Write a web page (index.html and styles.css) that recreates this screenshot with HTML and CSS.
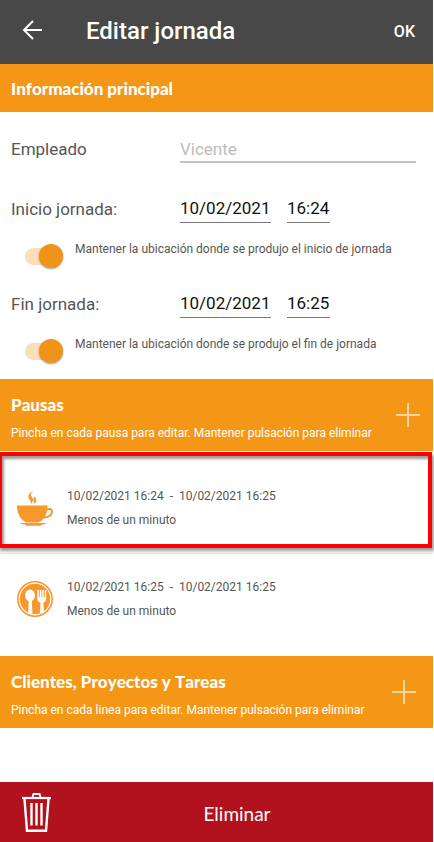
FILE: index.html
```html
<!DOCTYPE html>
<html lang="es">
<head>
<meta charset="utf-8">
<meta name="viewport" content="width=device-width, initial-scale=1">
<title>Editar jornada</title>
<link rel="stylesheet" href="styles.css">
</head>
<body>
<header class="topbar">
  <button class="back" type="button" aria-label="Volver">
    <svg width="20" height="20" viewBox="0 0 20 20" fill="none" stroke="#fff" stroke-width="2"><path d="M20 10H2M11 1L2 10l9 9"/></svg>
  </button>
  <h1 class="title">Editar jornada</h1>
  <button class="ok" type="submit" form="jornada">OK</button>
</header>
<main class="content">
  <div class="section-bar section-short"><h2 class="section-title">Información principal</h2></div>
  <form class="form" id="jornada">
    <div class="field">
      <label class="label" for="empleado">Empleado</label>
      <input class="value employee" id="empleado" type="text" placeholder="Vicente">
    </div>
    <div class="field">
      <label class="label" for="inicio-fecha">Inicio jornada:</label>
      <input class="value date" id="inicio-fecha" type="text" value="10/02/2021">
      <input class="value time" type="text" value="16:24" aria-label="Hora de inicio">
    </div>
    <div class="keep">
      <input class="switch" id="ubi-inicio" type="checkbox" role="switch" checked>
      <label class="keep-text" for="ubi-inicio">Mantener la ubicación donde se produjo el inicio de jornada</label>
    </div>
    <div class="field">
      <label class="label" for="fin-fecha">Fin jornada:</label>
      <input class="value date" id="fin-fecha" type="text" value="10/02/2021">
      <input class="value time" type="text" value="16:25" aria-label="Hora de fin">
    </div>
    <div class="keep">
      <input class="switch" id="ubi-fin" type="checkbox" role="switch" checked>
      <label class="keep-text" for="ubi-fin">Mantener la ubicación donde se produjo el fin de jornada</label>
    </div>
  </form>
  <section>
    <div class="section-bar section-pauses">
      <div class="section-text">
        <h2 class="section-title">Pausas</h2>
        <p class="hint">Pincha en cada pausa para editar. Mantener pulsación para eliminar</p>
      </div>
      <button class="add" type="button" aria-label="Añadir pausa">
        <svg width="24" height="24" viewBox="0 0 24 24" stroke="#fff" stroke-opacity=".6" stroke-width="2"><path d="M12 0v24M0 12h24"/></svg>
      </button>
    </div>
    <ul class="pauses">
      <li class="pause selected">
        <svg class="pause-icon" width="36" height="36" viewBox="0 -1 36 36" fill="#f7982d">
          <path d="M16 0C11.200 2.500 10.300 5.300 12.300 8.200c1.200 1.600 2 2.900 1.700 4.800 2.600-2.600 2.500-4.400.8-6.900C13.400 4 13.800 2.300 16 0zM18.500 5c-2.300 1.800-2.800 3.200-1.700 5 .6 1 .5 1.900-.3 3.100 2.500-1.200 3.400-2.600 2.600-4.400-.6-1.400-1.100-2.300-.6-3.700z"/>
          <path d="M0 14.500h30.500c-.1 7.500-2.500 13.500-8 16.500H8.500C2.500 28 .1 22 0 14.500z"/>
          <path d="M29.500 18.700c3-1.600 5.500-.8 5.500 2.100 0 3.300-3.200 5.300-8 5.600" fill="none" stroke="#f7982d" stroke-width="2"/>
          <path d="M8 31h14v1.500H8z" fill="#fbd0a0"/>
          <path d="M3.500 32h25.500c0 1.200-3 1.500-5 1.800v1H9v-1C7 33.500 3.500 33.200 3.500 32z"/>
        </svg>
        <div class="pause-text"><p>10/02/2021 16:24 &nbsp;-&nbsp; 10/02/2021 16:25</p><p>Menos de un minuto</p></div>
      </li>
      <li class="pause">
        <svg class="pause-icon" width="36" height="36" viewBox="0 0 36 36">
          <circle cx="18" cy="18" r="17.200" fill="#fff" stroke="#f7982d" stroke-width="1.600"/>
          <circle cx="18" cy="18" r="15.200" fill="#f7982d"/>
          <ellipse cx="13" cy="14.500" rx="4.900" ry="5.900" fill="#fff"/>
          <path d="M11.700 19h3l.8 13.500h-4.400zM20.300 9h1.600v7h.9V9h1.600v7h.9V9h1.600v7h.9V9h1.400v8.500c0 2.500-1.500 3.700-2.900 4.200l.7 9.800-4.100 1.500.6-11.300c-1.700-.5-3.200-1.700-3.200-4.200z" fill="#fff"/>
        </svg>
        <div class="pause-text"><p>10/02/2021 16:25 &nbsp;-&nbsp; 10/02/2021 16:25</p><p>Menos de un minuto</p></div>
      </li>
    </ul>
  </section>
  <section class="section-bar">
    <div class="section-text">
      <h2 class="section-title">Clientes, Proyectos y Tareas</h2>
      <p class="hint">Pincha en cada linea para editar. Mantener pulsación para eliminar</p>
    </div>
    <button class="add" type="button" aria-label="Añadir tarea">
      <svg width="24" height="24" viewBox="0 0 24 24" stroke="#fff" stroke-opacity=".6" stroke-width="2"><path d="M12 0v24M0 12h24"/></svg>
    </button>
  </section>
</main>
<button class="delete" type="button">
  <svg class="trash" width="30" height="40" viewBox="0 0 30 40" fill="none" stroke="#fff">
    <path d="M0 6h29" stroke-width="2.200"/>
    <path d="M10.500 5l1-3h6l1 3" stroke-width="2"/>
    <path d="M2.500 7l2.500 31.800h19L26.500 7" stroke-width="2.400"/>
    <path d="M9.500 11v22.500M14.500 11v22.500M19.500 11v22.500" stroke-width="2.400"/>
  </svg>
  <span class="delete-text">Eliminar</span>
</button>
</body>
</html>
```
FILE: styles.css
```css
* {
  box-sizing: border-box;
}

body {
  margin: 0;
  padding-right: 1px;
  min-height: 100vh;
  display: flex;
  flex-direction: column;
  background: #fff;
  color: #565656;
  font-family: Roboto, sans-serif;
  font-size: 12px;
}

h1, h2, p, ul {
  margin: 0;
  padding: 0;
}

button {
  border: 0;
  padding: 0;
  background: none;
  color: #fff;
  font-family: inherit;
}

svg {
  display: block;
}

.topbar {
  display: flex;
  align-items: center;
  height: 64px;
  padding: 0 18px 2px 22px;
  background: #484848;
}

.back {
  padding-bottom: 2px;
}

.title {
  flex: 1;
  margin-left: 44px;
  color: #fff;
  font-size: 24px;
  font-weight: 500;
  line-height: 32px;
}

.ok {
  font-size: 16px;
  font-weight: 500;
}

.content {
  flex: 1;
}

.section-bar {
  display: flex;
  align-items: center;
  justify-content: space-between;
  height: 72px;
  padding: 0 17px 0 11px;
  background: #f49717;
  color: #fff;
}

.section-short {
  height: 48px;
  padding-top: 2px;
}

.section-pauses {
  padding-right: 13px;
}

.section-text {
  padding-top: 8px;
}

.section-title {
  font-family: Lato, sans-serif;
  font-size: 17px;
  font-weight: 900;
  font-kerning: none;
  line-height: 24px;
}

.hint {
  margin-top: 4px;
  line-height: 24px;
}

.form {
  padding: 24px 17px 14px 11px;
}

.field {
  display: flex;
  align-items: center;
  height: 27px;
}

.keep + .field {
  margin-top: 21px;
}

.field:first-child {
  margin-bottom: 33px;
}

.label {
  width: 169px;
  padding-bottom: 2px;
  font-size: 17px;
}

.value {
  height: 27px;
  padding: 0 0 2px;
  border: 0;
  border-bottom: 1px solid #777;
  border-radius: 0;
  background: none;
  color: #111;
  font-family: inherit;
  font-size: 17px;
}

.employee {
  flex: 1;
  min-width: 0;
  padding: 0;
  border-bottom: 2px solid #c4c4c4;
}

.employee::placeholder {
  color: #bdbdbd;
}

.date {
  width: 91px;
}

.time {
  width: 43px;
  margin-left: 16px;
}

.keep {
  display: flex;
  height: 47px;
  padding: 14px 0 0 14px;
}

.switch {
  appearance: none;
  position: relative;
  display: flex;
  align-items: center;
  justify-content: flex-end;
  width: 38px;
  height: 24px;
  margin: 7px 12px 0 0;
}

.switch::before {
  content: "";
  flex: 1;
  height: 17px;
  margin-right: -12px;
  border-radius: 9px;
  background: #fcdfb8;
}

.switch::after {
  content: "";
  width: 24px;
  height: 24px;
  border-radius: 50%;
  background: #f09419;
  box-shadow: 0 1px 2px rgba(0, 0, 0, .4);
}

.keep-text {
  line-height: 24px;
}

.pauses {
  padding-top: 1px;
  list-style: none;
}

.pause {
  position: relative;
  display: flex;
  align-items: flex-start;
  height: 102px;
  padding: 21px 17px 0;
}

.selected {
  padding-top: 32px;
  border-bottom: 1px solid #f3e6bd;
}

.selected::after {
  content: "";
  position: absolute;
  inset: 0 1px 5px -2px;
  border: 4px solid #f00;
  box-shadow: 2px 3px 3px rgba(0, 0, 0, .4), inset 2px 3px 3px rgba(0, 0, 0, .4);
}

.pause-icon {
  margin: 6px 14px 0 0;
}

.pause-text {
  line-height: 24px;
}

.delete {
  display: flex;
  align-items: center;
  height: 60px;
  padding: 0 11px 0 22px;
  background: #b1121e;
}

.delete-text {
  flex: 1;
  padding-top: 2px;
  font-family: Lato, sans-serif;
  font-size: 19px;
}
```
